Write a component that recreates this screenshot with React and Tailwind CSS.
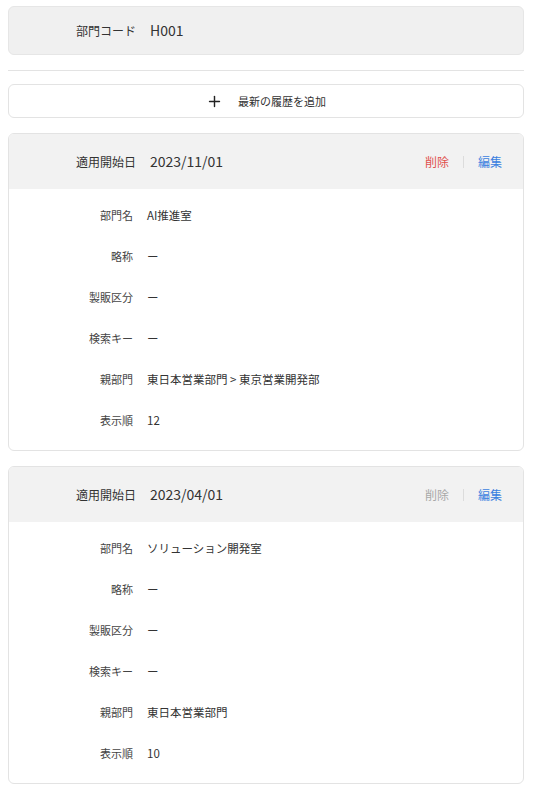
import React from 'react';
import { Plus } from 'lucide-react';

const FONT = '"Noto Sans CJK JP", "Liberation Sans", sans-serif';

const histories = [
  {
    start: '2023/11/01',
    canDelete: true,
    rows: [
      ['部門名', 'AI推進室'],
      ['略称', 'ー'],
      ['製販区分', 'ー'],
      ['検索キー', 'ー'],
      ['親部門', '東日本営業部門 > 東京営業開発部'],
      ['表示順', '12'],
    ],
  },
  {
    start: '2023/04/01',
    canDelete: false,
    rows: [
      ['部門名', 'ソリューション開発室'],
      ['略称', 'ー'],
      ['製販区分', 'ー'],
      ['検索キー', 'ー'],
      ['親部門', '東日本営業部門'],
      ['表示順', '10'],
    ],
  },
];

const HistoryCard = ({ item }) => (
  <div className="border border-[#e3e3e3] rounded-md overflow-hidden bg-white">
    {/* Header */}
    <div className="flex items-center h-[55px] bg-[#f2f2f2]">
      <div className="w-[127px] text-right text-[12px] text-[#333]">適用開始日</div>
      <div className="ml-[14px] text-[14px] text-[#333]">{item.start}</div>
      <div className="ml-auto flex items-center pr-[21px] text-[12px]">
        <button className={item.canDelete ? 'text-[#e0504d]' : 'text-[#a8a8a8]'}>削除</button>
        <span className="mx-[14px] w-px h-[12px] bg-[#dcdcdc]" />
        <button className="text-[#3b7fe0]">編集</button>
      </div>
    </div>

    {/* Body */}
    <div className="pt-[6px] pb-[9px]">
      {item.rows.map(([label, value]) => (
        <div key={label} className="flex items-center h-[41px]">
          <div className="w-[124px] text-right text-[11px] text-[#444]">{label}</div>
          <div className="ml-[14px] text-[11.5px] text-[#333]">{value}</div>
        </div>
      ))}
    </div>
  </div>
);

const App = () => {
  return (
    <div className="min-h-screen bg-white pt-[6px] pl-2 pr-3" style={{ fontFamily: FONT }}>
      {/* Department code */}
      <div className="flex items-center h-[49px] bg-[#f0f0f0] border border-[#e6e6e6] rounded-md">
        <div className="w-[127px] text-right text-[12px] text-[#333]">部門コード</div>
        <div className="ml-[14px] text-[14px] text-[#333]">H001</div>
      </div>

      <div className="mt-[15px] h-px bg-[#e3e3e3]" />

      {/* Add latest history */}
      <button className="mt-[13px] w-full h-[34px] flex items-center justify-center border border-[#e3e3e3] rounded-md bg-white">
        <Plus size={17} strokeWidth={2} className="text-[#222]" />
        <span className="ml-[15px] text-[11px] text-[#333]">最新の履歴を追加</span>
      </button>

      <div className="mt-[15px] flex flex-col gap-[15px]">
        {histories.map(item => (
          <HistoryCard key={item.start} item={item} />
        ))}
      </div>
    </div>
  );
};

export default App;
